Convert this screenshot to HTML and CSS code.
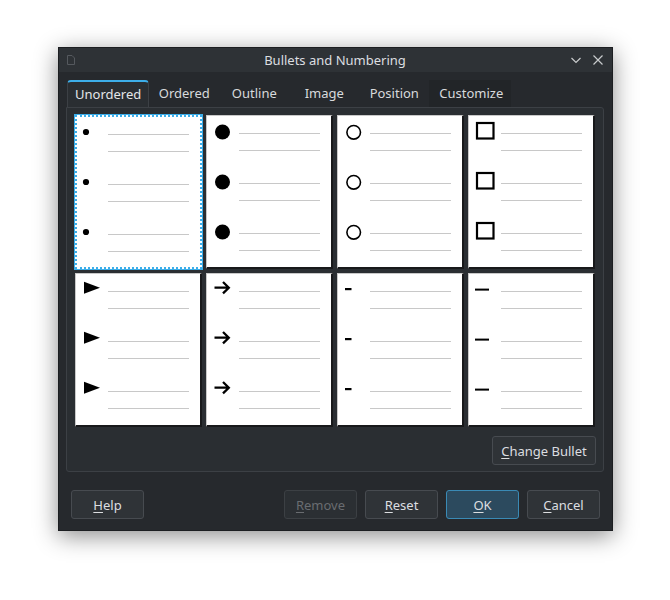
FILE: index.html
```html
<!DOCTYPE html>
<html>
  <head>
    <meta charset="UTF-8" />
    <title>Bullets and Numbering</title>
    <link rel="stylesheet" href="styles.css">
  </head>
  <body>
    <div class="window">
      <div class="titlebar">
        <svg class="app-icon" width="10" height="12" viewBox="0 0 10 12">
          <path d="M1.5 1.5 H6 L8.5 4 V10.5 H1.5 Z" fill="none" stroke="#55595e" stroke-width="1"/>
        </svg>
        <div class="title">Bullets and Numbering</div>
        <div class="title-buttons">
          <svg width="12" height="12" viewBox="0 0 12 12">
            <path d="M1.5 4 L6 8.5 L10.5 4" fill="none" stroke="#c8cacc" stroke-width="1.2"/>
          </svg>
          <svg width="12" height="12" viewBox="0 0 12 12">
            <path d="M1.5 1.5 L10.5 10.5 M10.5 1.5 L1.5 10.5" fill="none" stroke="#c8cacc" stroke-width="1.2"/>
          </svg>
        </div>
      </div>

      <div class="content">
        <div class="tabs">
          <div class="tab active">Unordered</div>
          <div class="tab">Ordered</div>
          <div class="tab">Outline</div>
          <div class="tab">Image</div>
          <div class="tab">Position</div>
          <div class="tab hover">Customize</div>
        </div>

        <div class="pane">
          <div class="grid">
            <!-- small dot -->
            <div class="cell selected">
              <div class="item"><svg viewBox="0 0 32 34"><circle cx="10" cy="15" r="3.1"/></svg><div class="lines"><i></i><i></i></div></div>
              <div class="item"><svg viewBox="0 0 32 34"><circle cx="10" cy="15" r="3.1"/></svg><div class="lines"><i></i><i></i></div></div>
              <div class="item"><svg viewBox="0 0 32 34"><circle cx="10" cy="15" r="3.1"/></svg><div class="lines"><i></i><i></i></div></div>
            </div>
            <!-- big dot -->
            <div class="cell">
              <div class="item"><svg viewBox="0 0 32 34"><circle cx="15.5" cy="16" r="7.5"/></svg><div class="lines"><i></i><i></i></div></div>
              <div class="item"><svg viewBox="0 0 32 34"><circle cx="15.5" cy="16" r="7.5"/></svg><div class="lines"><i></i><i></i></div></div>
              <div class="item"><svg viewBox="0 0 32 34"><circle cx="15.5" cy="16" r="7.5"/></svg><div class="lines"><i></i><i></i></div></div>
            </div>
            <!-- ring -->
            <div class="cell">
              <div class="item"><svg viewBox="0 0 32 34"><circle cx="15.7" cy="16.3" r="6.8" class="ring"/></svg><div class="lines"><i></i><i></i></div></div>
              <div class="item"><svg viewBox="0 0 32 34"><circle cx="15.7" cy="16.3" r="6.8" class="ring"/></svg><div class="lines"><i></i><i></i></div></div>
              <div class="item"><svg viewBox="0 0 32 34"><circle cx="15.7" cy="16.3" r="6.8" class="ring"/></svg><div class="lines"><i></i><i></i></div></div>
            </div>
            <!-- square -->
            <div class="cell">
              <div class="item"><svg viewBox="0 0 32 34"><rect x="8" y="7" width="16.5" height="15.5" class="box"/></svg><div class="lines"><i></i><i></i></div></div>
              <div class="item"><svg viewBox="0 0 32 34"><rect x="8" y="7" width="16.5" height="15.5" class="box"/></svg><div class="lines"><i></i><i></i></div></div>
              <div class="item"><svg viewBox="0 0 32 34"><rect x="8" y="7" width="16.5" height="15.5" class="box"/></svg><div class="lines"><i></i><i></i></div></div>
            </div>
            <!-- triangle -->
            <div class="cell">
              <div class="item"><svg viewBox="0 0 32 34"><polygon points="8,7.7 24,13.7 8,19.7"/></svg><div class="lines"><i></i><i></i></div></div>
              <div class="item"><svg viewBox="0 0 32 34"><polygon points="8,7.7 24,13.7 8,19.7"/></svg><div class="lines"><i></i><i></i></div></div>
              <div class="item"><svg viewBox="0 0 32 34"><polygon points="8,7.7 24,13.7 8,19.7"/></svg><div class="lines"><i></i><i></i></div></div>
            </div>
            <!-- arrow -->
            <div class="cell">
              <div class="item"><svg viewBox="0 0 32 34"><path d="M7.5 13.7 H21.5 M16 8 L21.8 13.7 L16 19.4" class="arrow"/></svg><div class="lines"><i></i><i></i></div></div>
              <div class="item"><svg viewBox="0 0 32 34"><path d="M7.5 13.7 H21.5 M16 8 L21.8 13.7 L16 19.4" class="arrow"/></svg><div class="lines"><i></i><i></i></div></div>
              <div class="item"><svg viewBox="0 0 32 34"><path d="M7.5 13.7 H21.5 M16 8 L21.8 13.7 L16 19.4" class="arrow"/></svg><div class="lines"><i></i><i></i></div></div>
            </div>
            <!-- hyphen -->
            <div class="cell">
              <div class="item"><svg viewBox="0 0 32 34"><rect x="7" y="14" width="6.5" height="2.2"/></svg><div class="lines"><i></i><i></i></div></div>
              <div class="item"><svg viewBox="0 0 32 34"><rect x="7" y="14" width="6.5" height="2.2"/></svg><div class="lines"><i></i><i></i></div></div>
              <div class="item"><svg viewBox="0 0 32 34"><rect x="7" y="14" width="6.5" height="2.2"/></svg><div class="lines"><i></i><i></i></div></div>
            </div>
            <!-- en dash -->
            <div class="cell">
              <div class="item"><svg viewBox="0 0 32 34"><rect x="6" y="14.6" width="14" height="2"/></svg><div class="lines"><i></i><i></i></div></div>
              <div class="item"><svg viewBox="0 0 32 34"><rect x="6" y="14.6" width="14" height="2"/></svg><div class="lines"><i></i><i></i></div></div>
              <div class="item"><svg viewBox="0 0 32 34"><rect x="6" y="14.6" width="14" height="2"/></svg><div class="lines"><i></i><i></i></div></div>
            </div>
          </div>

          <div class="pane-footer">
            <button class="btn change"><u>C</u>hange Bullet</button>
          </div>
        </div>

        <div class="buttons">
          <button class="btn"><u>H</u>elp</button>
          <div class="spacer"></div>
          <button class="btn" disabled><u>R</u>emove</button>
          <button class="btn"><u>R</u>eset</button>
          <button class="btn default"><u>O</u>K</button>
          <button class="btn"><u>C</u>ancel</button>
        </div>
      </div>
    </div>
  </body>
</html>
```

FILE: styles.css
```css
body {
  margin: 0;
  width: 670px;
  height: 600px;
  background: #ffffff;
  font-family: "Noto Sans", "DejaVu Sans", sans-serif;
  font-size: 13px;
  overflow: hidden;
}

.window {
  margin: 47px 0 0 58px;
  width: 555px;
  height: 484px;
  background: #2a2e32;
  border: 1px solid #1c1e21;
  box-sizing: border-box;
  box-shadow: 0 5px 22px rgba(0, 0, 0, 0.45);
  display: flex;
  flex-direction: column;
}

.titlebar {
  height: 24px;
  display: flex;
  align-items: center;
  background: #2e3236;
  color: #dcdee0;
  padding: 0 8px 0 7px;
}

.app-icon {
  width: 10px;
  height: 12px;
}

.title {
  flex: 1;
  text-align: center;
  padding-left: 24px;
}

.title-buttons {
  display: flex;
  gap: 10px;
}

.content {
  flex: 1;
  display: flex;
  flex-direction: column;
  padding: 8px 8px 0 7px;
  background: #26292d;
}

.tabs {
  display: flex;
  height: 27px;
  padding-left: 1px;
}

.tab {
  min-width: 70px;
  padding: 0 8px;
  box-sizing: border-box;
  text-align: center;
  line-height: 27px;
  color: #d8dadc;
}

.tab.active {
  padding: 0 7px;
  background: #2a2e32;
  border-top: 2px solid #3daee9;
  border-left: 1px solid #3c4045;
  border-right: 1px solid #3c4045;
  border-radius: 4px 4px 0 0;
  line-height: 24px;
  color: #e4e6e8;
}

.tab.hover {
  padding: 0 8px 0 10px;
  background: #222528;
}

.pane {
  height: 365px;
  background: #2a2e32;
  border: 1px solid #3c4045;
  border-radius: 0 3px 3px 3px;
  box-sizing: border-box;
  padding: 7px 8px 0 8px;
  display: flex;
  flex-direction: column;
}

.grid {
  display: grid;
  grid-template-columns: repeat(4, 127px);
  grid-template-rows: repeat(2, 154px);
  column-gap: 4px;
  row-gap: 4px;
}

.cell {
  background: #ffffff;
  border-top: 1px solid #c9c9c9;
  border-left: 1px solid #c9c9c9;
  border-right: 2px solid #18191b;
  border-bottom: 2px solid #18191b;
  box-sizing: border-box;
}

.cell.selected {
  border: 2px dotted #3daee9;
  box-shadow: 0 0 0 1px #3daee9;
}

.item {
  display: flex;
  height: 50px;
}

.item svg {
  width: 32px;
  height: 34px;
  flex: none;
  fill: #000000;
}

.cell.selected .item svg {
  margin-left: -1px;
}

.item .ring {
  fill: none;
  stroke: #000000;
  stroke-width: 1.6;
}

.item .box {
  fill: none;
  stroke: #000000;
  stroke-width: 2.2;
}

.item .arrow {
  fill: none;
  stroke: #000000;
  stroke-width: 2.3;
}

.lines {
  width: 81px;
  padding-top: 17px;
}

.lines i {
  display: block;
  height: 1px;
  background: #c8c8c8;
  margin-bottom: 16px;
}

.pane-footer {
  display: flex;
  justify-content: flex-end;
  padding-top: 9px;
}

.btn {
  height: 29px;
  min-width: 73px;
  padding: 0 9px;
  background: #2f3337;
  color: #dcdee0;
  border: 1px solid #474b50;
  border-radius: 3px;
  font-family: "Noto Sans", "DejaVu Sans", sans-serif;
  font-size: 13px;
  white-space: nowrap;
}

.btn.change {
  width: 104px;
  padding: 0;
  margin-right: -1px;
}

.btn u {
  text-decoration-thickness: 1px;
  text-underline-offset: 2px;
}

.btn:disabled {
  color: #696c70;
  border-color: #3c4044;
  background: #2b2f33;
}

.btn.default {
  background: #2c4a5e;
  border-color: #3a8ab5;
}

.buttons {
  display: flex;
  gap: 8px;
  margin-top: 18px;
  padding: 0 4px 0 5px;
}

.spacer {
  flex: 1;
}
```
